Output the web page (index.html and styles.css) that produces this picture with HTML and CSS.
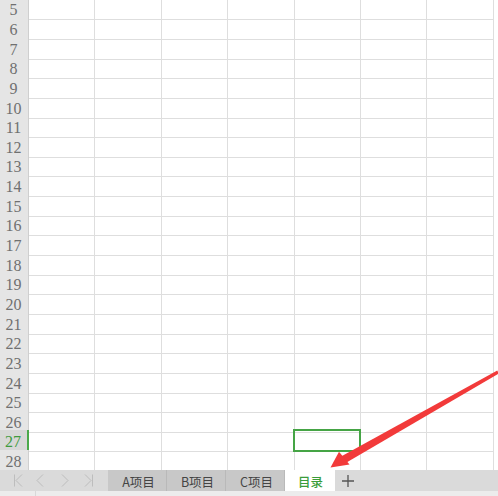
FILE: index.html
```html
<!DOCTYPE html>
<html>
<head>
<meta charset="utf-8">
<link rel="stylesheet" href="styles.css">
</head>
<body>
<div class="page">
  <div class="sheet">
    <div class="row"><div class="rh">5</div><div class="cell"></div><div class="cell"></div><div class="cell"></div><div class="cell"></div><div class="cell"></div><div class="cell"></div><div class="cell"></div></div>
    <div class="row"><div class="rh">6</div><div class="cell"></div><div class="cell"></div><div class="cell"></div><div class="cell"></div><div class="cell"></div><div class="cell"></div><div class="cell"></div></div>
    <div class="row"><div class="rh">7</div><div class="cell"></div><div class="cell"></div><div class="cell"></div><div class="cell"></div><div class="cell"></div><div class="cell"></div><div class="cell"></div></div>
    <div class="row"><div class="rh">8</div><div class="cell"></div><div class="cell"></div><div class="cell"></div><div class="cell"></div><div class="cell"></div><div class="cell"></div><div class="cell"></div></div>
    <div class="row"><div class="rh">9</div><div class="cell"></div><div class="cell"></div><div class="cell"></div><div class="cell"></div><div class="cell"></div><div class="cell"></div><div class="cell"></div></div>
    <div class="row"><div class="rh">10</div><div class="cell"></div><div class="cell"></div><div class="cell"></div><div class="cell"></div><div class="cell"></div><div class="cell"></div><div class="cell"></div></div>
    <div class="row"><div class="rh">11</div><div class="cell"></div><div class="cell"></div><div class="cell"></div><div class="cell"></div><div class="cell"></div><div class="cell"></div><div class="cell"></div></div>
    <div class="row"><div class="rh">12</div><div class="cell"></div><div class="cell"></div><div class="cell"></div><div class="cell"></div><div class="cell"></div><div class="cell"></div><div class="cell"></div></div>
    <div class="row"><div class="rh">13</div><div class="cell"></div><div class="cell"></div><div class="cell"></div><div class="cell"></div><div class="cell"></div><div class="cell"></div><div class="cell"></div></div>
    <div class="row"><div class="rh">14</div><div class="cell"></div><div class="cell"></div><div class="cell"></div><div class="cell"></div><div class="cell"></div><div class="cell"></div><div class="cell"></div></div>
    <div class="row"><div class="rh">15</div><div class="cell"></div><div class="cell"></div><div class="cell"></div><div class="cell"></div><div class="cell"></div><div class="cell"></div><div class="cell"></div></div>
    <div class="row"><div class="rh">16</div><div class="cell"></div><div class="cell"></div><div class="cell"></div><div class="cell"></div><div class="cell"></div><div class="cell"></div><div class="cell"></div></div>
    <div class="row"><div class="rh">17</div><div class="cell"></div><div class="cell"></div><div class="cell"></div><div class="cell"></div><div class="cell"></div><div class="cell"></div><div class="cell"></div></div>
    <div class="row"><div class="rh">18</div><div class="cell"></div><div class="cell"></div><div class="cell"></div><div class="cell"></div><div class="cell"></div><div class="cell"></div><div class="cell"></div></div>
    <div class="row"><div class="rh">19</div><div class="cell"></div><div class="cell"></div><div class="cell"></div><div class="cell"></div><div class="cell"></div><div class="cell"></div><div class="cell"></div></div>
    <div class="row"><div class="rh">20</div><div class="cell"></div><div class="cell"></div><div class="cell"></div><div class="cell"></div><div class="cell"></div><div class="cell"></div><div class="cell"></div></div>
    <div class="row"><div class="rh">21</div><div class="cell"></div><div class="cell"></div><div class="cell"></div><div class="cell"></div><div class="cell"></div><div class="cell"></div><div class="cell"></div></div>
    <div class="row"><div class="rh">22</div><div class="cell"></div><div class="cell"></div><div class="cell"></div><div class="cell"></div><div class="cell"></div><div class="cell"></div><div class="cell"></div></div>
    <div class="row"><div class="rh">23</div><div class="cell"></div><div class="cell"></div><div class="cell"></div><div class="cell"></div><div class="cell"></div><div class="cell"></div><div class="cell"></div></div>
    <div class="row"><div class="rh">24</div><div class="cell"></div><div class="cell"></div><div class="cell"></div><div class="cell"></div><div class="cell"></div><div class="cell"></div><div class="cell"></div></div>
    <div class="row"><div class="rh">25</div><div class="cell"></div><div class="cell"></div><div class="cell"></div><div class="cell"></div><div class="cell"></div><div class="cell"></div><div class="cell"></div></div>
    <div class="row"><div class="rh">26</div><div class="cell"></div><div class="cell"></div><div class="cell"></div><div class="cell"></div><div class="cell"></div><div class="cell"></div><div class="cell"></div></div>
    <div class="row current"><div class="rh">27</div><div class="cell"></div><div class="cell"></div><div class="cell"></div><div class="cell"></div><div class="cell sel"></div><div class="cell"></div><div class="cell"></div></div>
    <div class="row"><div class="rh">28</div><div class="cell"></div><div class="cell"></div><div class="cell"></div><div class="cell"></div><div class="cell"></div><div class="cell"></div><div class="cell"></div></div>
  </div>
  <div class="tabbar">
    <div class="nav">
      <svg width="108" height="21" viewBox="0 0 108 21">
        <g fill="none" stroke="#bdbdbd" stroke-width="1">
          <path d="M14.5 4.5v12M22 4.5l-6 6 6 6"/>
          <path d="M43 4.5l-6 6 6 6"/>
          <path d="M62 4.5l6 6-6 6"/>
          <path d="M85 4.5l6 6-6 6M92.5 4.5v12"/>
        </g>
      </svg>
    </div>
    <div class="tab">A项目</div>
    <div class="tab">B项目</div>
    <div class="tab">C项目</div>
    <div class="tab active">目录</div>
    <div class="add">
      <svg width="14" height="14" viewBox="0 0 14 14"><path d="M7 1v12M1 7h12" stroke="#555" stroke-width="1.3" fill="none"/></svg>
    </div>
  </div>
  <div class="status"><div class="status-left"></div></div>
  <svg class="arrow" width="498" height="496" viewBox="0 0 498 496">
    <polygon fill="#f23a3a" points="497.3,370.6 498.7,373.6 346.5,462.5 341.5,456.3"/>
    <polygon fill="#f23a3a" points="330.5,467.5 339,451.8 349.5,464.5"/>
  </svg>
</div>
</body>
</html>
```
FILE: styles.css
```css
html, body {
  margin: 0;
  padding: 0;
  background: #ffffff;
  overflow: hidden;
}
.page {
  position: relative;
  width: 498px;
  height: 496px;
  overflow: hidden;
  display: flex;
  flex-direction: column;
}
.sheet {
  margin-top: -1.65px;
  height: 471.65px;
  display: flex;
  flex-direction: column;
  flex: none;
}
.row {
  display: grid;
  grid-template-columns: 29px repeat(7, 66.4px);
  height: 19.65px;
  flex: none;
}
.rh {
  box-sizing: border-box;
  background: #e5e5e5;
  border-right: 1px solid #cfcfcf;
  border-bottom: 1px solid #d8d8d8;
  font-family: "Liberation Serif", "DejaVu Serif", serif;
  font-size: 16px;
  color: #707070;
  text-align: center;
  line-height: 19px;
  padding-top: 2px;
  padding-right: 1px;
}
.cell {
  box-sizing: border-box;
  border-right: 1px solid #dedede;
  border-bottom: 1px solid #dedede;
}
.row.current .rh {
  background: #d7d7d7;
  color: #3f9b3f;
  border-right: 2px solid #4aa94a;
}
.cell.sel {
  position: relative;
}
.cell.sel::after {
  content: "";
  position: absolute;
  left: -2px;
  top: -1px;
  right: -1px;
  bottom: -1px;
  border: 2px solid #45a445;
}
.tabbar {
  height: 21px;
  flex: none;
  background: #dadada;
  display: flex;
  align-items: stretch;
  font-family: "Noto Sans CJK SC", "Noto Sans", sans-serif;
  font-size: 12.5px;
}
.nav {
  width: 108px;
  flex: none;
}
.nav svg {
  display: block;
}
.tab {
  width: 59px;
  flex: none;
  box-sizing: border-box;
  background: #c8c8c8;
  border-right: 1px solid #b9b9b9;
  color: #454545;
  display: flex;
  align-items: center;
  justify-content: center;
  padding-top: 1px;
  padding-left: 3px;
}
.tab:first-of-type {
  border-left: 1px solid #c0c0c0;
  width: 60px;
}
.tab.active {
  width: 50px;
  background: #ffffff;
  border-right: none;
  color: #3a9d3a;
  font-weight: 500;
  padding-left: 1px;
}
.add {
  width: 26px;
  display: flex;
  align-items: center;
  justify-content: center;
}
.status {
  flex: 1;
  background: #ececec;
  display: flex;
}
.status-left {
  width: 35px;
  border-right: 1px solid #d8d8d8;
}
.arrow {
  position: absolute;
  left: 0;
  top: 0;
  pointer-events: none;
}
```
